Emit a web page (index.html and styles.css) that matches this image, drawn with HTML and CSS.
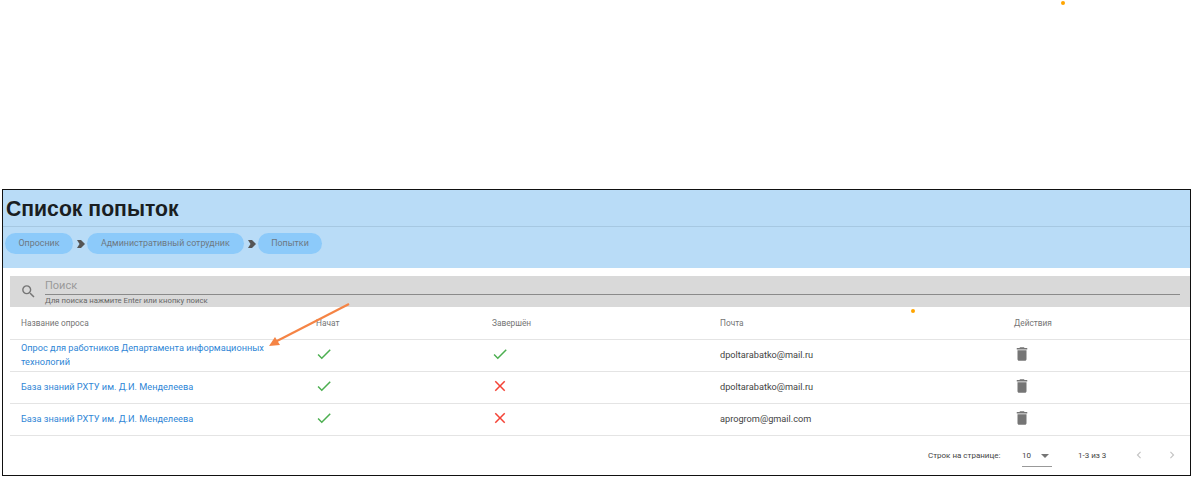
FILE: index.html
```html
<!DOCTYPE html>
<html lang="ru">
<head>
<meta charset="utf-8">
<title>Список попыток</title>
<link rel="stylesheet" href="styles.css">
</head>
<body>
<span class="dot dot-top"></span>
<main class="frame">
  <header class="head">
    <h1 class="title">Список попыток</h1>
    <nav class="crumbs">
      <span class="chip">Опросник</span>
      <svg class="sep" viewBox="0 0 9 8"><path d="M0 0h4l4 4-4 4H0l2.5-4z" fill="#555"/></svg>
      <span class="chip">Административный сотрудник</span>
      <svg class="sep" viewBox="0 0 9 8"><path d="M0 0h4l4 4-4 4H0l2.5-4z" fill="#555"/></svg>
      <span class="chip">Попытки</span>
    </nav>
  </header>
  <section class="content">
    <div class="search">
      <svg class="search-icon" viewBox="0 0 24 24"><path d="M15.5 14h-.79l-.28-.27A6.47 6.47 0 0 0 16 9.5 6.5 6.5 0 1 0 9.5 16c1.61 0 3.09-.59 4.23-1.57l.27.28v.79l5 4.99L20.49 19l-4.99-5zm-6 0C7.01 14 5 11.99 5 9.5S7.01 5 9.5 5 14 7.01 14 9.5 11.99 14 9.5 14z" fill="#757575"/></svg>
      <div class="search-field">
        <div class="search-input">Поиск</div>
        <div class="search-help">Для поиска нажмите Enter или кнопку поиск</div>
      </div>
    </div>
    <table class="grid">
      <colgroup><col class="c1"><col class="c2"><col class="c3"><col class="c4"><col></colgroup>
      <thead>
        <tr><th>Название опроса</th><th>Начат</th><th>Завершён</th><th>Почта</th><th>Действия</th></tr>
      </thead>
      <tbody>
        <tr>
          <td class="name"><a href="#">Опрос для работников Департамента информационных технологий</a></td>
          <td><svg class="mark" viewBox="0 0 24 24"><path d="M9 16.17 4.83 12l-1.42 1.41L9 19 21 7l-1.41-1.41z" fill="#4caf50"/></svg></td>
          <td><svg class="mark" viewBox="0 0 24 24"><path d="M9 16.17 4.83 12l-1.42 1.41L9 19 21 7l-1.41-1.41z" fill="#4caf50"/></svg></td>
          <td>dpoltarabatko@mail.ru</td>
          <td><svg class="trash" viewBox="0 0 24 24"><path d="M6 19c0 1.1.9 2 2 2h8c1.1 0 2-.9 2-2V7H6v12zM19 4h-3.5l-1-1h-5l-1 1H5v2h14V4z" fill="#757575"/></svg></td>
        </tr>
        <tr>
          <td class="name"><a href="#">База знаний РХТУ им. Д.И. Менделеева</a></td>
          <td><svg class="mark" viewBox="0 0 24 24"><path d="M9 16.17 4.83 12l-1.42 1.41L9 19 21 7l-1.41-1.41z" fill="#4caf50"/></svg></td>
          <td><svg class="mark" viewBox="0 0 24 24"><path d="M19 6.41 17.59 5 12 10.59 6.41 5 5 6.41 10.59 12 5 17.59 6.41 19 12 13.41 17.59 19 19 17.59 13.41 12z" fill="#f44336"/></svg></td>
          <td>dpoltarabatko@mail.ru</td>
          <td><svg class="trash" viewBox="0 0 24 24"><path d="M6 19c0 1.1.9 2 2 2h8c1.1 0 2-.9 2-2V7H6v12zM19 4h-3.5l-1-1h-5l-1 1H5v2h14V4z" fill="#757575"/></svg></td>
        </tr>
        <tr>
          <td class="name"><a href="#">База знаний РХТУ им. Д.И. Менделеева</a></td>
          <td><svg class="mark" viewBox="0 0 24 24"><path d="M9 16.17 4.83 12l-1.42 1.41L9 19 21 7l-1.41-1.41z" fill="#4caf50"/></svg></td>
          <td><svg class="mark" viewBox="0 0 24 24"><path d="M19 6.41 17.59 5 12 10.59 6.41 5 5 6.41 10.59 12 5 17.59 6.41 19 12 13.41 17.59 19 19 17.59 13.41 12z" fill="#f44336"/></svg></td>
          <td>aprogrom@gmail.com</td>
          <td><svg class="trash" viewBox="0 0 24 24"><path d="M6 19c0 1.1.9 2 2 2h8c1.1 0 2-.9 2-2V7H6v12zM19 4h-3.5l-1-1h-5l-1 1H5v2h14V4z" fill="#757575"/></svg></td>
        </tr>
      </tbody>
    </table>
    <footer class="pager">
      <span class="pager-label">Строк на странице:</span>
      <span class="pager-select"><span>10</span><svg class="caret" viewBox="0 0 10 5"><path d="M0 0h10L5 5z" fill="#757575"/></svg></span>
      <span class="pager-range">1-3 из 3</span>
      <svg class="nav-arrow" viewBox="0 0 24 24"><path d="M15.41 7.41 14 6l-6 6 6 6 1.41-1.41L10.83 12z" fill="#c4c4c4"/></svg>
      <svg class="nav-arrow" viewBox="0 0 24 24"><path d="M10 6 8.59 7.41 13.17 12l-4.58 4.59L10 18l6-6z" fill="#c4c4c4"/></svg>
    </footer>
  </section>
  <span class="dot dot-table"></span>
  <svg class="callout" viewBox="0 0 90 50"><path d="M82 2 8 40" stroke="#f58445" stroke-width="2.200" fill="none"/><path d="M2 44 8 35l5 8z" fill="#f58445"/></svg>
</main>
</body>
</html>
```

FILE: styles.css
```css
* { box-sizing: border-box; }
html, body { margin: 0; padding: 0; background: #fff; }
body {
  height: 477px;
  padding: 189px 1px 1px 2px;
  font-family: Roboto, "Liberation Sans", sans-serif;
  overflow: hidden;
  position: relative;
}
.frame {
  position: relative;
  height: 287px;
  border: 1px solid #111;
}
.head { height: 78px; background: #b9dcf7; }
.title {
  margin: 0;
  height: 37px;
  padding: 5px 0 0 3px;
  font: bold 21.200px/28px "Liberation Sans", Arial, sans-serif;
  color: #1a1e22;
  border-bottom: 1px solid #a6c8e2;
}
.crumbs {
  display: flex;
  align-items: center;
  padding: 6px 0 0 2px;
}
.chip {
  height: 21px;
  padding: 0 13.500px;
  border-radius: 11px;
  background: #8ccafa;
  color: #6c7882;
  font-size: 8.900px;
  line-height: 20px;
}
.chip:nth-of-type(2) { padding: 0 14px; }
.sep { width: 9px; height: 8px; margin: 1px 1px 0 4px; }
.content { padding: 8px 0 0 7px; }
.search {
  display: flex;
  height: 31px;
  background: #d9d9d9;
  padding-right: 10px;
}
.search-icon { width: 17px; height: 17px; margin: 7px 0 0 10px; flex: none; }
.search-field { flex: 1; margin-left: 8px; }
.search-input {
  height: 19px;
  padding-top: 3px;
  font-size: 11px;
  line-height: 14px;
  color: #9a9a9a;
  border-bottom: 1px solid #8a8a8a;
}
.search-help { font-size: 7.750px; line-height: 11px; color: #666; }
.grid {
  width: 100%;
  table-layout: fixed;
  border-collapse: collapse;
}
.c1 { width: 295px; }
.c2 { width: 176px; }
.c3 { width: 228px; }
.c4 { width: 294px; }
.grid th {
  height: 32px;
  padding: 0 0 0 11px;
  text-align: left;
  font-size: 8.300px;
  font-weight: 400;
  color: #757575;
  border-bottom: 1px solid #e4e4e4;
}
.grid td {
  height: 32px;
  padding: 0 0 2px 11px;
  font-size: 9.200px;
  color: #444;
  border-bottom: 1px solid #e4e4e4;
  vertical-align: middle;
}
.grid .name { line-height: 14px; padding: 0 20px 0 11px; }
.name a { color: #2f86d6; text-decoration: none; }
.mark { display: block; width: 18px; height: 18px; margin-left: -1px; }
.trash { display: block; width: 18px; height: 18px; margin-left: -1px; }
.pager {
  display: flex;
  align-items: center;
  height: 39px;
  font-size: 8px;
  color: #444;
}
.pager > * { flex: none; }
.pager-label { margin-left: 918px; width: 94px; }
.pager-select {
  display: flex;
  align-items: center;
  width: 30px;
  height: 21px;
  margin-top: 2px;
  border-bottom: 1px solid #999;
}
.caret { width: 8px; height: 4px; margin-left: 10px; }
.pager-range { margin-left: 26px; width: 54px; }
.nav-arrow { width: 14px; height: 14px; margin-right: 19px; }
.dot {
  position: absolute;
  width: 4px;
  height: 4px;
  border-radius: 50%;
  background: #ffa500;
}
.dot-top { left: 1061px; top: 1px; }
.dot-table { left: 908px; top: 119px; }
.callout {
  position: absolute;
  left: 264px;
  top: 112px;
  width: 90px;
  height: 50px;
}
```
